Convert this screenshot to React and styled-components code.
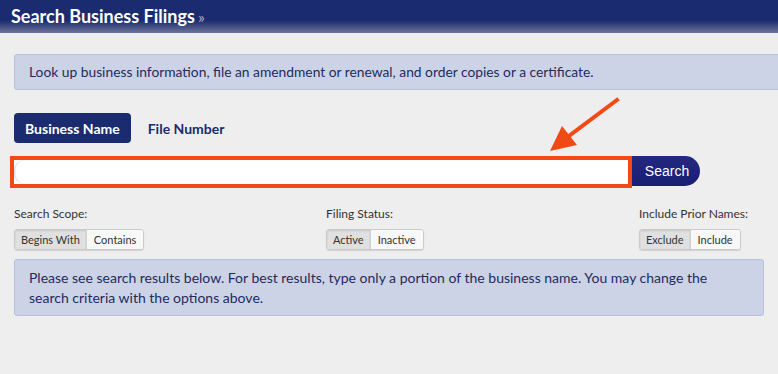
import React from "react";
import styled, { createGlobalStyle } from "styled-components";

const Global = createGlobalStyle`
  html, body { margin: 0; padding: 0; background: #eeeeee; overflow: hidden; }
  body { font-family: Lato, "Open Sans", sans-serif; }
  * { box-sizing: border-box; }
`;

const Page = styled.div`
  position: relative;
  width: 778px;
  height: 374px;
  background: #eeeeee;
  overflow: hidden;
`;

const Header = styled.header`
  height: 33px;
  padding: 5px 0 0 11px;
  background: linear-gradient(to bottom, #1a2b6f 0%, #1a2b6f 62%, #6c7499 100%);
`;

const Title = styled.h1`
  margin: 0;
  font-family: Lato, sans-serif;
  font-weight: 700;
  font-size: 18px;
  line-height: 22px;
  color: #ffffff;
`;

const Raquo = styled.span`
  color: #a9b0cc;
  font-size: 16px;
  font-weight: 400;
  margin-left: 3px;
`;

const Content = styled.main`
  padding: 21px 14px 0 14px;
`;

const InfoBox = styled.div`
  background: #cdd3e6;
  border: 1px solid #b5c1dc;
  border-radius: 3px;
  color: #1d2b5e;
  font-size: 13.8px;
  line-height: 20px;
  padding: 7px 14px;
  margin-right: ${(p) => (p.$wide ? "-20px" : "0")};
`;

const Tabs = styled.div`
  display: flex;
  align-items: center;
  margin-top: 23px;
`;

const Tab = styled.button`
  font-family: Lato, sans-serif;
  font-weight: 700;
  font-size: 14px;
  height: 30px;
  padding: 0 ${(p) => (p.$active ? "11px" : "12px")};
  border: none;
  border-radius: 4px;
  background: ${(p) => (p.$active ? "#1a2b70" : "transparent")};
  color: ${(p) => (p.$active ? "#ffffff" : "#1a2b6f")};
  margin-right: ${(p) => (p.$active ? "5px" : "0")};
  cursor: pointer;
`;

const SearchRow = styled.div`
  display: flex;
  align-items: flex-start;
  margin-top: 13px;
  margin-left: -4px;
`;

const Highlight = styled.div`
  width: 622px;
  height: 32px;
  border: 4px solid #f04a17;
  background: #ffffff;
  display: flex;
`;

const Input = styled.input`
  flex: 1;
  border: none;
  outline: none;
  border-radius: 10px 0 0 10px;
  box-shadow: inset 2px 0 2px -1px #cfcfcf;
  background: #ffffff;
  font-family: Lato, sans-serif;
  font-size: 14px;
  padding: 0 8px;
`;

const SearchButton = styled.button`
  width: 68px;
  height: 30px;
  border: none;
  border-radius: 0 15px 15px 0;
  background: linear-gradient(to bottom, #24297f 0%, #181e74 100%);
  color: #ffffff;
  font-family: "Liberation Sans", Arial, sans-serif;
  font-size: 14px;
  padding: 0 0 0 2px;
  cursor: pointer;
`;

const Options = styled.div`
  display: grid;
  grid-template-columns: 312px 313px auto;
  margin-top: 19px;
`;

const OptionGroup = styled.div`
  display: flex;
  flex-direction: column;
  align-items: flex-start;
`;

const Label = styled.div`
  font-size: 12px;
  line-height: 14px;
  color: #333333;
  margin-bottom: 8px;
`;

const Segment = styled.div`
  display: inline-flex;
  border: 1px solid #cbcbcb;
  border-radius: 3px;
  overflow: hidden;
  box-shadow: 0 1px 1px rgba(0, 0, 0, 0.12);
`;

const SegButton = styled.button`
  font-family: Lato, sans-serif;
  font-size: 11px;
  height: 19px;
  padding: 0 ${(p) => (p.$first ? "6px" : "7px")};
  border: none;
  border-left: ${(p) => (p.$first ? "none" : "1px solid #d0d0d0")};
  background: ${(p) => (p.$active ? "#e0e0e0" : "#f8f8f8")};
  box-shadow: ${(p) => (p.$active ? "inset 0 1px 2px rgba(0,0,0,0.12)" : "none")};
  color: #333333;
  cursor: pointer;
`;

const ResultBox = styled(InfoBox)`
  margin-top: 9px;
  font-size: 14px;
  padding: 8px 40px 7px 14px;
`;

const Arrow = styled.svg`
  position: absolute;
  left: 540px;
  top: 92px;
  width: 90px;
  height: 70px;
  pointer-events: none;
`;

function Seg({ items, active }) {
  return (
    <Segment>
      {items.map((t, i) => (
        <SegButton key={t} $first={i === 0} $active={i === active}>
          {t}
        </SegButton>
      ))}
    </Segment>
  );
}

export default function App() {
  return (
    <Page>
      <Global />
      <Header>
        <Title>
          Search Business Filings<Raquo>»</Raquo>
        </Title>
      </Header>
      <Content>
        <InfoBox $wide>
          Look up business information, file an amendment or renewal, and order copies or a certificate.
        </InfoBox>
        <Tabs>
          <Tab $active>Business Name</Tab>
          <Tab>File Number</Tab>
        </Tabs>
        <SearchRow>
          <Highlight>
            <Input type="text" />
          </Highlight>
          <SearchButton>Search</SearchButton>
        </SearchRow>
        <Options>
          <OptionGroup>
            <Label>Search Scope:</Label>
            <Seg items={["Begins With", "Contains"]} active={0} />
          </OptionGroup>
          <OptionGroup>
            <Label>Filing Status:</Label>
            <Seg items={["Active", "Inactive"]} active={0} />
          </OptionGroup>
          <OptionGroup>
            <Label>Include Prior Names:</Label>
            <Seg items={["Exclude", "Include"]} active={0} />
          </OptionGroup>
        </Options>
        <ResultBox>
          Please see search results below. For best results, type only a portion of the business name. You may change the search criteria with the options above.
        </ResultBox>
      </Content>
      <Arrow viewBox="540 92 90 70">
        <line x1="617" y1="100" x2="565" y2="139" stroke="#f04a17" strokeWidth="4" strokeLinecap="square" />
        <polygon points="550,151 562,126 577,145" fill="#f04a17" />
      </Arrow>
    </Page>
  );
}
